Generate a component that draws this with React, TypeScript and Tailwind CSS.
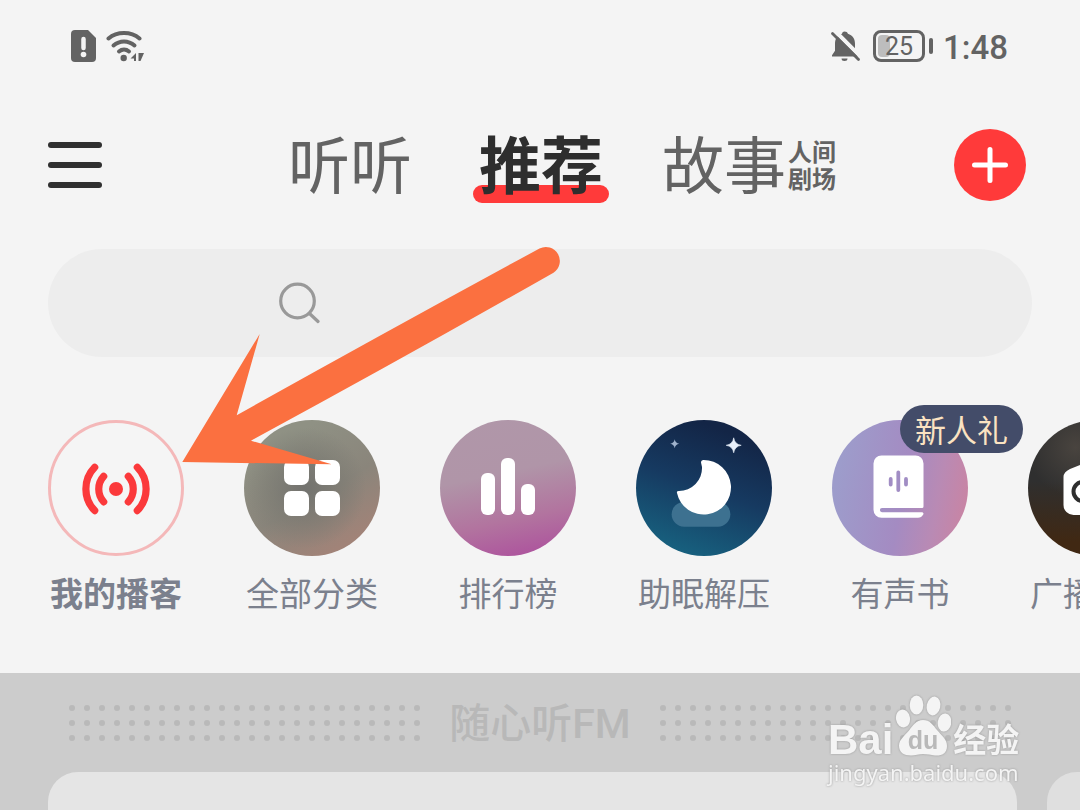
import type { ReactNode } from "react";

const dotColumns = Array.from({ length: 24 }, (_, index) => index * 15 + 4);
const dotRows = [4, 19, 34];

function StatusBar() {
  return (
    <div className="flex items-center justify-between h-23 pl-17 pr-18 text-[#636363]">
      <div className="flex items-center gap-1.5">
        <svg className="w-8 h-8" viewBox="0 0 32 32" fill="currentColor">
          <path d="M7 0h13l8 8v20a4 4 0 0 1-4 4H7a4 4 0 0 1-4-4V4a4 4 0 0 1 4-4z" />
          <path d="M15.500 9v9" stroke="#f4f4f4" strokeWidth="4.500" strokeLinecap="round" />
          <circle cx="15.500" cy="24.500" r="2.800" fill="#f4f4f4" />
        </svg>
        <svg className="w-10 h-8" viewBox="0 0 40 32" fill="none" stroke="currentColor" strokeWidth="4" strokeLinecap="round">
          <path d="M2.500 8.500C11 1.300 25 1.300 33.500 8.500" />
          <path d="M7.500 15.500c6.200-5.400 14.800-5.400 21 0" />
          <path d="M13 21.500c3-2.600 7-2.600 10 0" />
          <circle cx="17.700" cy="28" r="3.200" fill="currentColor" stroke="none" />
          <path d="M30 23v8h-2v-2.500h-3.500zM32.500 23h5.500l-3.500 8h-2z" fill="currentColor" stroke="none" />
        </svg>
      </div>
      <div className="flex items-center">
        <svg className="w-8 h-8" viewBox="0 0 32 32" fill="none">
          <path d="M15.500 1.500c1.800 0 3 .8 3.400 2.200 4.700 1.500 7.100 5.100 7.100 10v7l3 4.500v1.300H3v-1.300l3-4.500v-7c0-4.900 2.400-8.500 7-10 .4-1.400 1.200-2.200 2.500-2.200z" fill="currentColor" />
          <path d="M12.500 28.500h6a3 2.500 0 0 1-6 0z" fill="currentColor" />
          <path d="M7 2l27 27" stroke="#f4f4f4" strokeWidth="4" />
          <path d="M3.500 3.500l26 26" stroke="currentColor" strokeWidth="2.800" strokeLinecap="round" />
        </svg>
        <div className="relative flex items-center justify-center ml-3 w-13 h-8 rounded-lg border-3 border-current">
          <span className="absolute left-0.5 inset-y-0.5 w-3 rounded-sm bg-[#bdbdbd]"></span>
          <span className="relative font-['Roboto',sans-serif] text-[25px] leading-none">25</span>
        </div>
        <span className="ml-1 w-1 h-4 rounded-full bg-current"></span>
        <span className="ml-2.5 pt-0.5 font-['Roboto',sans-serif] font-medium text-[33px] leading-none">1:48</span>
      </div>
    </div>
  );
}

function Header() {
  return (
    <header className="flex items-center h-36 pl-12 pr-[54px] mt-px">
      <button type="button" aria-label="菜单" className="flex flex-col justify-between w-[54px] h-[46px]">
        <span className="w-full h-1.5 rounded-full bg-[#303030]"></span>
        <span className="w-full h-1.5 rounded-full bg-[#303030]"></span>
        <span className="w-full h-1.5 rounded-full bg-[#303030]"></span>
      </button>
      <nav className="flex flex-1 items-center justify-end gap-[53px] pr-[118px] text-[62px] leading-none text-[#636363]">
        <button type="button" className="pr-2 pb-1.5">听听</button>
        <button type="button" className="relative isolate px-1.5 pb-1.5 font-bold text-[#2e2e2e]">
          <span className="absolute inset-x-0 -bottom-1 -z-10 h-[18px] rounded-full bg-[#ff3a3a]"></span>
          推荐
        </button>
        <button type="button" className="flex items-center pb-1.5">
          故事
          <span className="mt-1 ml-0.5 w-12 text-left text-2xl leading-[27px] font-bold">
            人间
            <br />
            剧场
          </span>
        </button>
      </nav>
      <button type="button" aria-label="添加" className="flex items-center justify-center w-18 h-18 rounded-full bg-[#ff3a3a]">
        <svg className="w-9 h-9" viewBox="0 0 36 36" stroke="#fff" strokeWidth="5" strokeLinecap="round">
          <path d="M18 2.500v31M2.500 18h31" />
        </svg>
      </button>
    </header>
  );
}

function SearchBar() {
  return (
    <label className="flex items-center mx-12 mt-3 h-27 pl-[230px] pr-12 rounded-full bg-[#ededed]">
      <svg className="w-[42px] h-[42px] shrink-0" viewBox="0 0 42 42" fill="none" stroke="#999" strokeWidth="3.200" strokeLinecap="round">
        <circle cx="19.500" cy="19" r="16.800" />
        <path d="M31.500 31.500l8.500 8" />
      </svg>
      <input type="search" aria-label="搜索" className="flex-1 min-w-0 ml-4 bg-transparent text-3xl outline-none" />
    </label>
  );
}

function Category({ label, circle, active, badge, children }: {
  label: string;
  circle: string;
  active?: boolean;
  badge?: string;
  children: ReactNode;
}) {
  return (
    <a href="#" className="relative flex flex-col items-center shrink-0 w-34">
      <span className={`w-34 h-34 rounded-full ${circle}`}>
        <svg className="w-34 h-34" viewBox="0 0 136 136" fill="#fff">
          {children}
        </svg>
      </span>
      {badge && (
        <span className="absolute left-17 -top-[15px] flex items-center justify-center w-[123px] h-12 pb-0.5 rounded-full bg-[#434c69] text-[31px] leading-none text-[#fbe3c2] whitespace-nowrap">
          {badge}
        </span>
      )}
      <span className={`mt-3.5 text-[33px] leading-[44px] whitespace-nowrap text-[#7b808d] ${active ? "font-bold" : ""}`}>
        {label}
      </span>
    </a>
  );
}

function Categories() {
  return (
    <section className="flex gap-15 pl-12 pt-[63px] pb-[59px] overflow-hidden">
      <Category label="我的播客" circle="bg-[#f5f5f5]" active>
        <circle cx="68" cy="68" r="66.500" fill="none" stroke="#f4b8b9" strokeWidth="3" />
        <circle cx="68" cy="69" r="7" fill="#fb393b" />
        <g fill="none" stroke="#fb393b" strokeWidth="7.200" strokeLinecap="round">
          <path d="M55.700 56.300a19 19 0 0 0 0 25.600M80.300 56.300a19 19 0 0 1 0 25.600" />
          <path d="M46.700 47.300a31 31 0 0 0 0 43.300M89.300 47.300a31 31 0 0 1 0 43.300" />
        </g>
      </Category>
      <Category label="全部分类" circle="bg-[radial-gradient(circle_at_45%_50%,#73736f_0%,#77777080_35%,transparent_60%),linear-gradient(150deg,#8f9184_20%,#8a857b_55%,#a18378_85%)]">
        <rect x="40" y="40" width="25" height="25" rx="7" />
        <rect x="71" y="40" width="25" height="25" rx="7" />
        <rect x="40" y="71" width="25" height="25" rx="7" />
        <rect x="71" y="71" width="25" height="25" rx="7" />
      </Category>
      <Category label="排行榜" circle="bg-[linear-gradient(168deg,#b097a9_0%,#b095a8_40%,#b2749f_70%,#ac4e9d_98%)]">
        <rect x="41" y="53" width="14" height="42" rx="6" />
        <rect x="61" y="38" width="14" height="57" rx="6" />
        <rect x="81" y="64" width="14" height="31" rx="6" />
      </Category>
      <Category label="助眠解压" circle="bg-[linear-gradient(200deg,#132546_15%,#163a61_50%,#17617f_90%)]">
        <path d="M48 82h34a12.300 12.300 0 0 1 0 24.700H48a12.300 12.300 0 0 1 0-24.700z" fill="#3d7190" />
        <path d="M65 42.500q0-2.500 2.500-2.500A27.300 27.300 0 1 1 41 73q-.6-2 1.800-2A23 23 0 0 0 66 47z" />
        <path d="M97.700 17.800q1 6.500 7.500 7.500-6.500 1-7.500 7.500-1-6.500-7.500-7.500 6.500-1 7.500-7.500z" fill="#e8f0fa" stroke="#e8f0fa" strokeWidth=".6" />
        <path d="M38.700 19.200q.6 3.900 4.500 4.500-3.900.6-4.500 4.500-.6-3.900-4.500-4.500 3.900-.6 4.500-4.500z" fill="#9fb2cc" />
      </Category>
      <Category label="有声书" badge="新人礼" circle="bg-[linear-gradient(100deg,#9d9ccb_10%,#a48bc2_52%,#b98ab4_75%,#cc83a0_98%)]">
        <path d="M49.500 35.500h34a8 8 0 0 1 8 8v43a1.500 1.500 0 0 1-1.500 1.500H50a2 2 0 0 0 0 4.200h40a1.500 1.500 0 0 1 1 2.600q-1.500 3-5 3H49.500a8 8 0 0 1-8-8V43.500a8 8 0 0 1 8-8z" />
        <path d="M58.700 59v5.500M66.300 52.500v17.500M74 59v5.500" stroke="#a18dc4" strokeWidth="3.800" strokeLinecap="round" />
      </Category>
      <Category label="广播电台" circle="bg-[radial-gradient(circle_at_35%_20%,#49443f_0%,transparent_35%),linear-gradient(180deg,#2f2f2f_45%,#402813_90%)]">
        <path d="M42 49l34-14 2 4-14 7h26a10 10 0 0 1 10 10v29a10 10 0 0 1-10 10H45.500a10 10 0 0 1-10-10V57q0-5 6.500-8z" />
        <circle cx="55" cy="71.500" r="9.500" fill="none" stroke="#2e2e2e" strokeWidth="4" />
      </Category>
    </section>
  );
}

function Dots() {
  return (
    <svg className="w-[353px] h-[38px] shrink-0" viewBox="0 0 353 38" fill="#b9b9b9">
      {dotRows.map((y) => dotColumns.map((x) => <circle key={`${x}-${y}`} cx={x} cy={y} r="3" />))}
    </svg>
  );
}

function RadioSection() {
  return (
    <section className="flex flex-col flex-1 bg-[#ccc]">
      <div className="flex items-center justify-between h-[99px] px-17">
        <Dots />
        <h2 className="pt-1 font-['Roboto','Noto_Sans_CJK_SC',sans-serif] text-[41px] leading-none font-medium text-[#b8b8b8]">随心听FM</h2>
        <Dots />
      </div>
      <div className="flex flex-1 gap-[30px] pl-12">
        <div className="flex-1 rounded-t-[30px] bg-[#e5e5e5]"></div>
        <div className="w-[33px] rounded-tl-[30px] bg-[#dfdfdf]"></div>
      </div>
    </section>
  );
}

function Arrow() {
  return (
    <svg className="absolute left-45 top-60 w-[384px] h-[228px] pointer-events-none" viewBox="180 240 384 228" fill="#fb7040">
      <path d="M182.300 462L259.700 334L236.700 415.300Q380 335 539.500 248.500A14 14 0 0 1 553.500 272.700Q400 360 251 440.700L331.700 464.300Z" />
    </svg>
  );
}

function Watermark() {
  return (
    <div className="absolute right-[54px] bottom-[22px] flex flex-col w-[198px] text-[#f4f4f4] drop-shadow-[0_0_1px_#999]">
      <div className="flex items-end">
        <span className="font-['Liberation_Sans',sans-serif] font-bold text-[42px] leading-8">Bai</span>
        <svg className="w-14 h-[62px] mx-0.5" viewBox="894 694 56 62" fill="currentColor">
          <ellipse cx="902" cy="718.500" rx="7" ry="9" transform="rotate(-10 902 718.500)" />
          <ellipse cx="915.500" cy="705" rx="6.800" ry="9.500" />
          <ellipse cx="932.500" cy="706" rx="6.800" ry="9.500" transform="rotate(12 932.500 706)" />
          <ellipse cx="943.500" cy="722.500" rx="6.800" ry="9" transform="rotate(8 943.500 722.500)" />
          <path d="M922 720c7 0 10 5 14 10s10 9 10 16c0 8-6 10-12 9.500-4-.5-8-1.500-12-1.500s-8 1.500-12 1.500c-7 0-12-3-12-10 0-6 6-10 10-15s7-10.500 14-10.500z" />
          <text x="922" y="749" textAnchor="middle" fill="#b9b9b9" fontSize="25" fontWeight="bold" fontFamily="Liberation Sans, sans-serif">du</text>
        </svg>
        <span className="text-[33px] leading-9 font-bold whitespace-nowrap">经验</span>
      </div>
      <span className="font-['Noto_Sans',sans-serif] text-[22px] leading-8">jingyan.baidu.com</span>
    </div>
  );
}

export default function App() {
  return (
    <main className="relative flex flex-col min-h-screen overflow-hidden bg-[#f4f4f4] font-['Noto_Sans_CJK_SC',sans-serif]">
      <StatusBar />
      <Header />
      <SearchBar />
      <Categories />
      <RadioSection />
      <Arrow />
      <Watermark />
    </main>
  );
}
